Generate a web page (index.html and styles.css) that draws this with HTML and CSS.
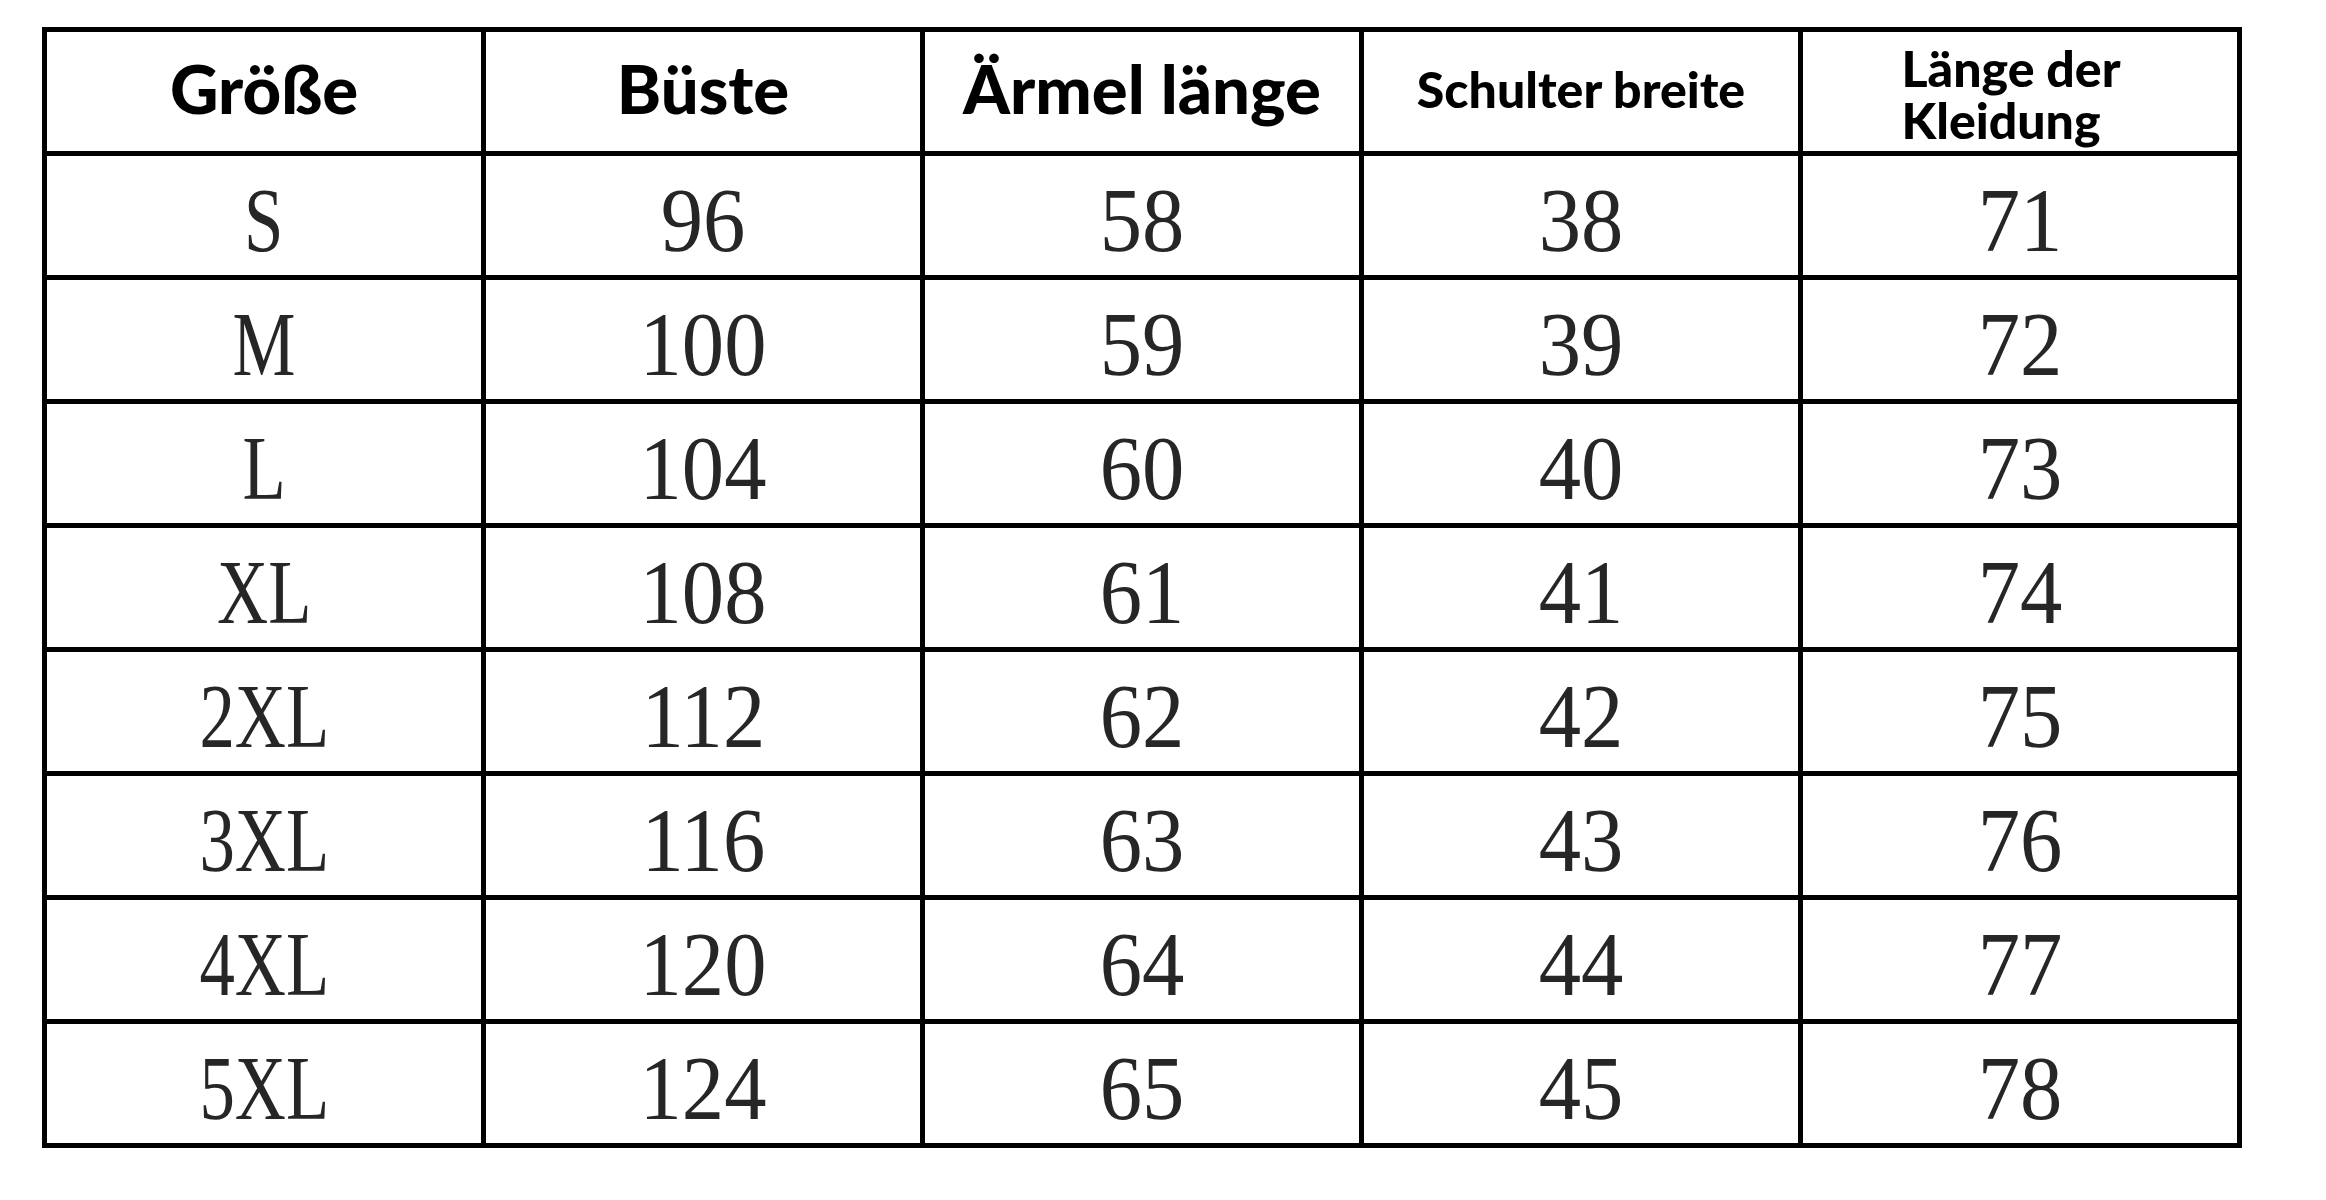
FILE: index.html
```html
<!DOCTYPE html>
<html lang="de">
<head>
<meta charset="utf-8">
<title>Größentabelle</title>
<link rel="stylesheet" href="styles.css">
</head>
<body>
<table class="chart">
  <thead>
    <tr>
      <th class="h-lg"><span>Größe</span></th>
      <th class="h-lg"><span>Büste</span></th>
      <th class="h-lg"><span>Ärmel länge</span></th>
      <th class="h-sm"><span>Schulter breite</span></th>
      <th class="h-sm"><span class="two">Länge der<br>Kleidung</span></th>
    </tr>
  </thead>
  <tbody>
    <tr><td class="size"><span>S</span></td><td><span>96</span></td><td><span>58</span></td><td><span>38</span></td><td><span>71</span></td></tr>
    <tr><td class="size"><span>M</span></td><td><span>100</span></td><td><span>59</span></td><td><span>39</span></td><td><span>72</span></td></tr>
    <tr><td class="size"><span>L</span></td><td><span>104</span></td><td><span>60</span></td><td><span>40</span></td><td><span>73</span></td></tr>
    <tr><td class="size"><span>XL</span></td><td><span>108</span></td><td><span>61</span></td><td><span>41</span></td><td><span>74</span></td></tr>
    <tr><td class="size"><span>2XL</span></td><td><span>112</span></td><td><span>62</span></td><td><span>42</span></td><td><span>75</span></td></tr>
    <tr><td class="size"><span>3XL</span></td><td><span>116</span></td><td><span>63</span></td><td><span>43</span></td><td><span>76</span></td></tr>
    <tr><td class="size"><span>4XL</span></td><td><span>120</span></td><td><span>64</span></td><td><span>44</span></td><td><span>77</span></td></tr>
    <tr><td class="size"><span>5XL</span></td><td><span>124</span></td><td><span>65</span></td><td><span>45</span></td><td><span>78</span></td></tr>
  </tbody>
</table>
</body>
</html>
```

FILE: styles.css
```css
html, body {
  margin: 0;
  padding: 0;
  background: #ffffff;
}

body {
  padding: 27px 0 0 42px;
}

.chart {
  border-collapse: separate;
  border-spacing: 5px;
  background: #000000;
  table-layout: fixed;
}

.chart th,
.chart td {
  background: #ffffff;
  width: 434px;
  height: 119px;
  padding: 0;
  text-align: center;
  vertical-align: middle;
  overflow: hidden;
}

.chart th {
  font-family: Lato, "Noto Sans", sans-serif;
  font-weight: 900;
  color: #000000;
  line-height: 1;
}

.chart th span {
  display: inline-block;
  margin-bottom: 6px;
}

.chart th.h-lg {
  font-size: 67px;
}

.chart th.h-sm {
  font-size: 50px;
}

.chart th .two {
  text-align: left;
  line-height: 52px;
  margin: 4px 18px 0 0;
}

.chart td {
  font-family: "Liberation Serif", "Times New Roman", serif;
  font-size: 92px;
  line-height: 1;
  color: #262626;
}

.chart td span {
  display: inline-block;
  margin-top: 8px;
  transform: scaleX(0.92);
}

.chart td.size span {
  transform: scaleX(0.77);
}
```
